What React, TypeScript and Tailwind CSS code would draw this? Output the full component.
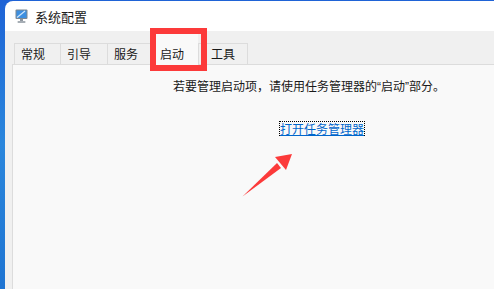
const FONT = '"Microsoft YaHei", "Noto Sans CJK SC", "Noto Sans", sans-serif';
const LATIN = '"Liberation Sans", sans-serif';

const TABS = [
  { label: '常规', w: 'w-[47px]', pl: 'pl-[6px]' },
  { label: '引导', w: 'w-[48px]', pl: 'pl-[6px]' },
  { label: '服务', w: 'w-[46px]', pl: 'pl-[6px]' },
  { label: '启动', w: 'w-[46px]', pl: 'pl-[8px]', active: true },
  { label: '工具', w: 'w-[50px]', pl: 'pl-[12px]' },
];

function MsconfigIcon() {
  return (
    <svg width="15" height="15" viewBox="0 0 15 15" aria-hidden="true">
      <rect x="1.5" y="0.5" width="12" height="9.5" rx="1" fill="#7d8791" />
      <rect x="2.5" y="1.5" width="10" height="7.5" fill="#3d8fe0" />
      <path d="M3 8.5 L11 2" stroke="#cfe6fb" strokeWidth="1.2" />
      <rect x="6" y="10" width="3" height="2" fill="#8e969e" />
      <rect x="3.5" y="12" width="8" height="2" rx="0.8" fill="#a7aeb5" />
    </svg>
  );
}

export default function App() {
  return (
    <div
      className="relative flex h-[289px] w-[494px] overflow-hidden bg-gradient-to-b from-[#1f63d6] via-[#2a86dc] to-[#1e74d2]"
      style={{ fontFamily: FONT }}
    >
      <div className="w-[5px] shrink-0" />
      <div className="mt-[1px] flex flex-1 flex-col overflow-hidden rounded-tl-[8px] bg-white">
        {/* title bar */}
        <div className="flex h-[30px] shrink-0 items-center gap-[6px] pl-[9px]">
          <MsconfigIcon />
          <span className="text-[13px] leading-none text-[#1a1a1a]">系统配置</span>
        </div>

        <div className="flex flex-1 flex-col bg-[#f0f0f0] pl-[7px] pt-[12px]">
          {/* tabs */}
          <div className="relative z-10 flex h-[21px] items-end pl-[2px]">
            {TABS.map((tab) =>
              tab.active ? (
                <div
                  key={tab.label}
                  className={`${tab.w} ${tab.pl} -mb-[1px] flex h-[31px] items-end bg-[#f9f9f9] pb-[4px] text-[12px] leading-[14px] text-[#1a1a1a]`}
                >
                  {tab.label}
                </div>
              ) : (
                <div
                  key={tab.label}
                  className={`${tab.w} ${tab.pl} -mr-[1px] flex h-[21px] items-center border-l border-r border-t border-[#dcdcdc] bg-[#f0f0f0] text-[12px] leading-none text-[#1a1a1a]`}
                >
                  {tab.label}
                </div>
              ),
            )}
          </div>

          {/* panel */}
          <div className="flex flex-1 flex-col items-start border-l border-t border-[#dcdcdc] bg-[#f9f9f9] pl-[160px] pt-[13px]">
            <p className="text-[12px] leading-[16px] text-[#1a1a1a]">
              若要管理启动项，请使用任务管理器的<span style={{ fontFamily: LATIN }}>“</span>启动
              <span style={{ fontFamily: LATIN }}>”</span>部分。
            </p>
            <a
              href="#"
              className="ml-[106px] mt-[26px] border border-dotted border-black text-[12px] leading-[13px] text-[#0066cc] underline"
            >
              打开任务管理器
            </a>
          </div>
        </div>
      </div>

      {/* annotation: red box around the 启动 tab */}
      <div className="absolute left-[150px] top-[28px] z-20 h-[43px] w-[57px] border-[6px] border-[#fc3a3a]" />

      {/* annotation: red arrow pointing at the link */}
      <svg className="absolute left-[236px] top-[148px] z-20" width="64" height="56" viewBox="0 0 64 56" aria-hidden="true">
        <path d="M6.5 48.5 L41 15 L45 20 Z" fill="#fc3a3a" />
        <path d="M56 6 L39 9 L50 22 Z" fill="#fc3a3a" />
      </svg>
    </div>
  );
}
